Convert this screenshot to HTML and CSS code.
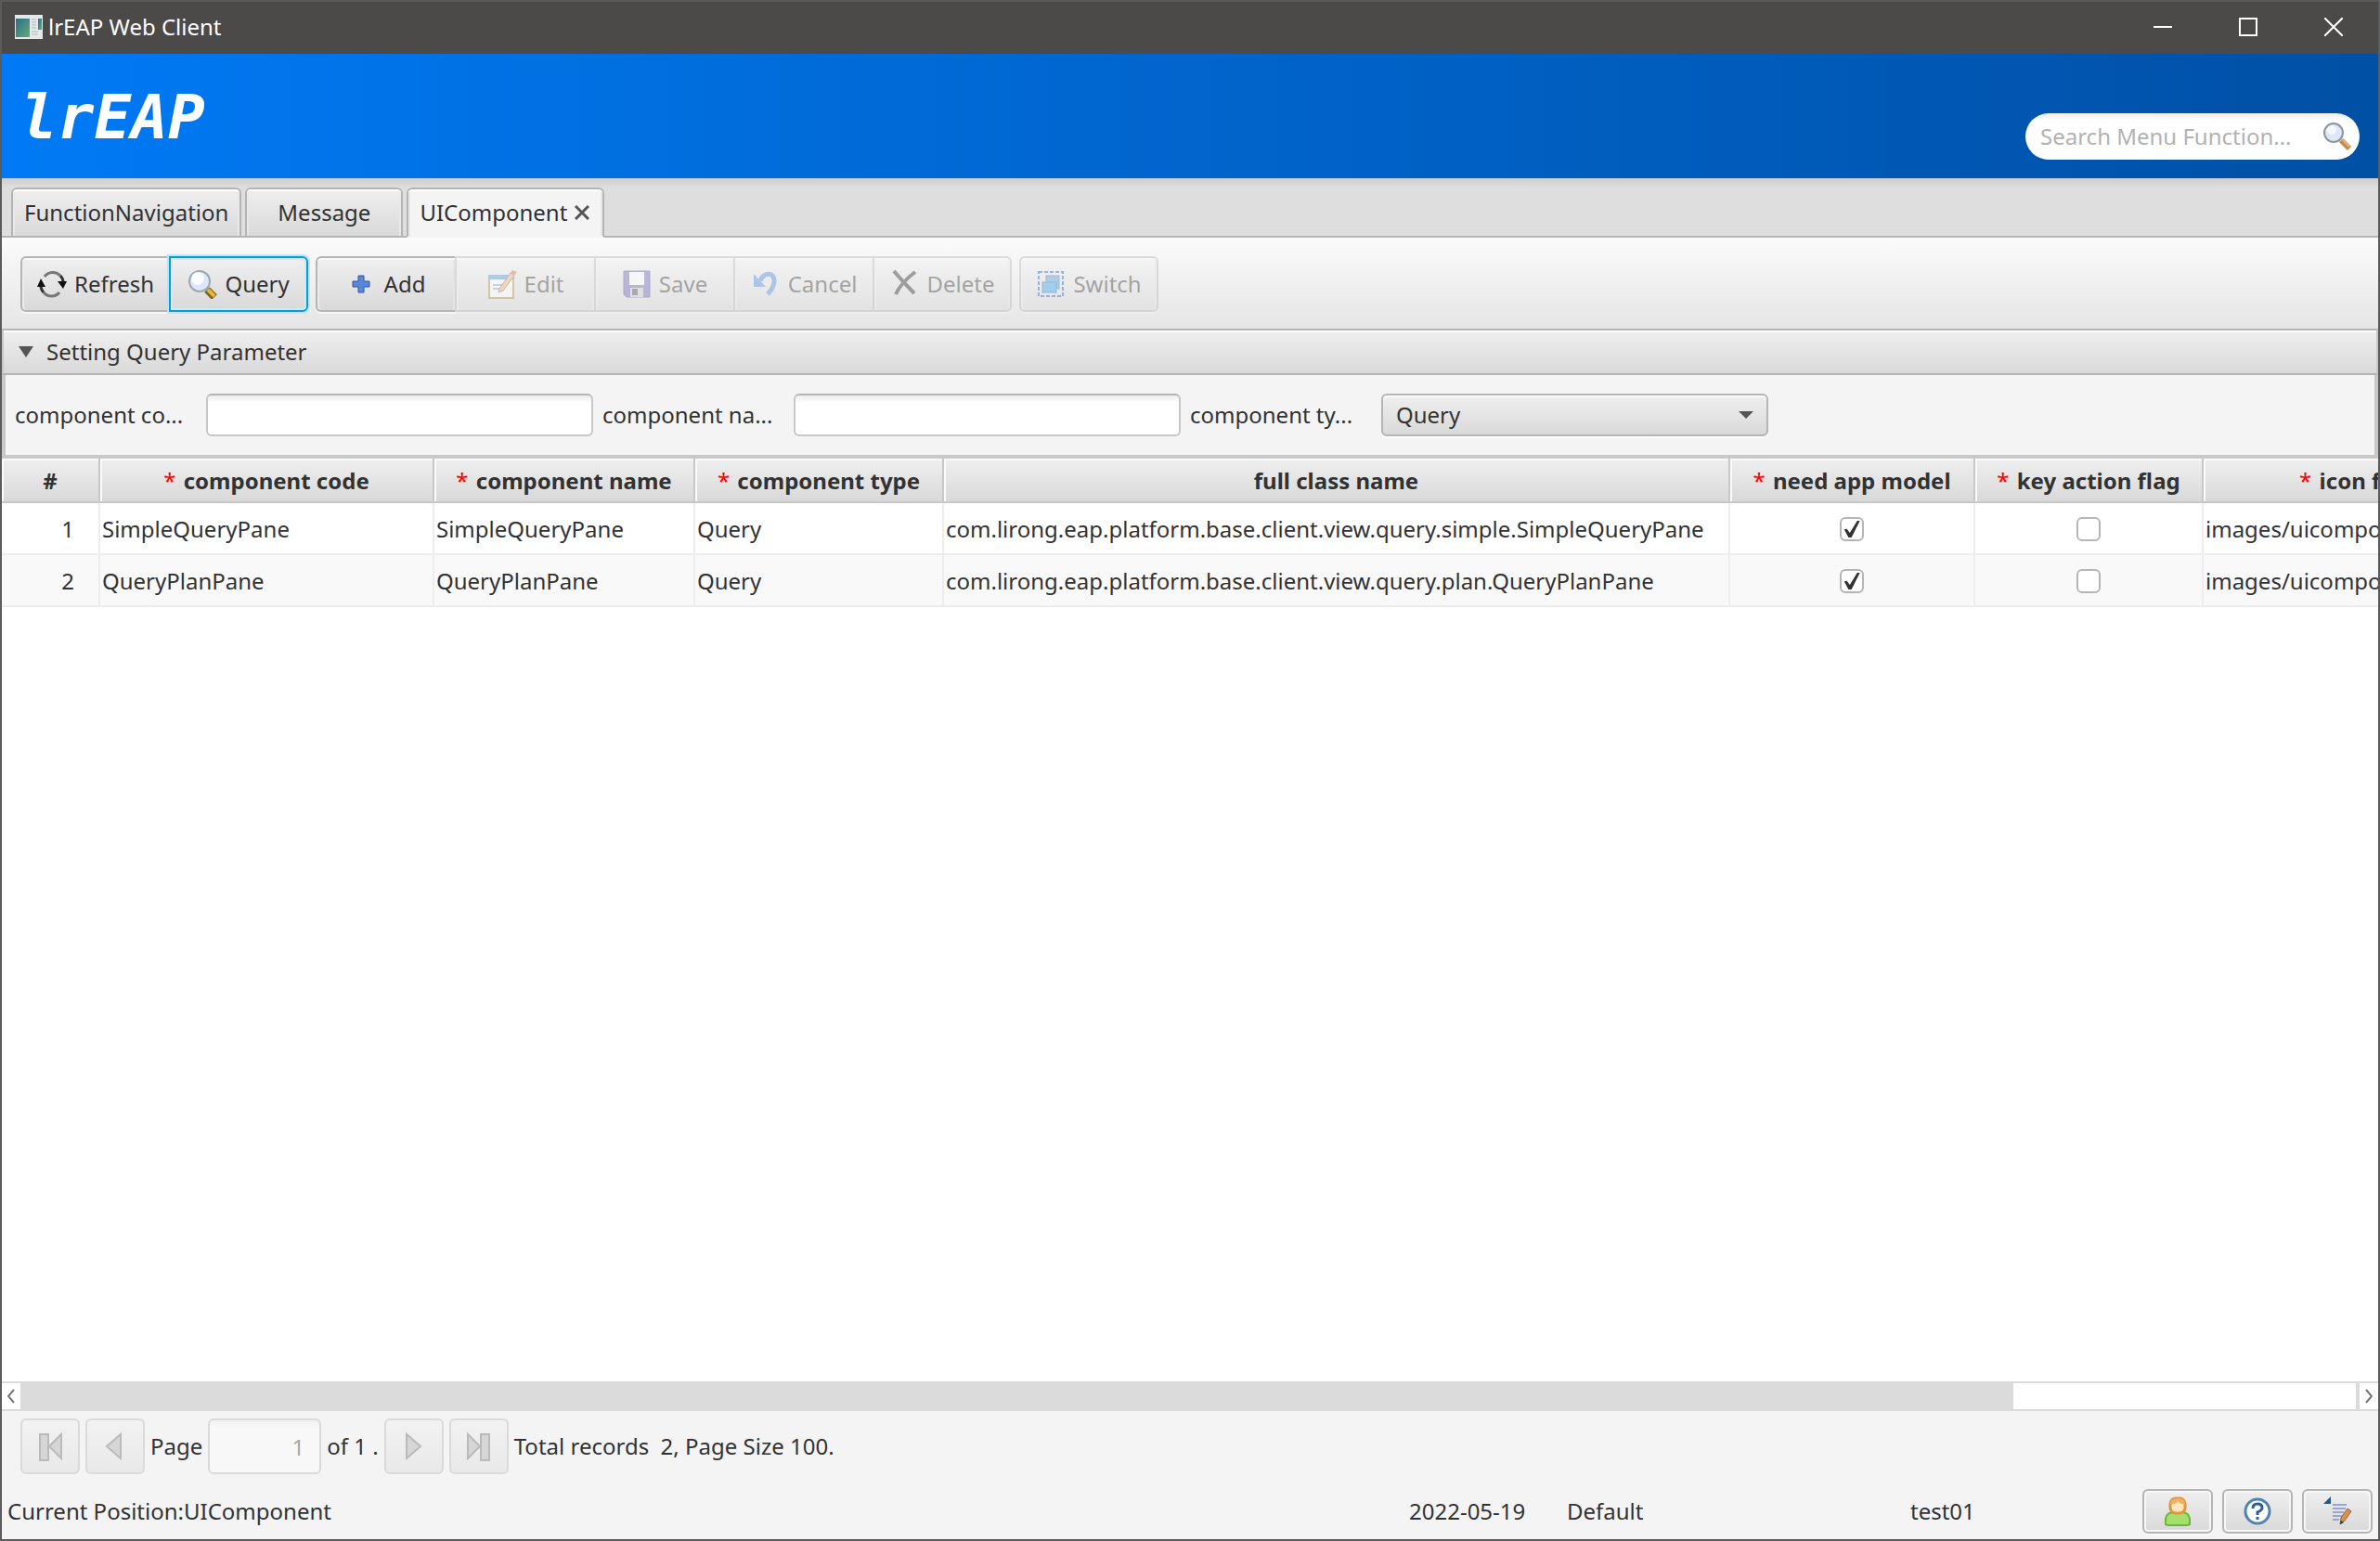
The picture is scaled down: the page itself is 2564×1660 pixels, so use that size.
FILE: index.html
```html
<!DOCTYPE html>
<html lang="en">

<head>
    <meta charset="UTF-8">
    <meta name="viewport" content="width=device-width, initial-scale=1.0">
    <title>lrEAP Web Client</title>
    <link rel="stylesheet" href="styles.css">
</head>

<body>
    <div class="window">
        <div class="title-bar">
            <svg class="app-icon" viewBox="0 0 30 26">
                <defs>
                    <linearGradient id="screen" x1="0" y1="0" x2="1" y2="1">
                        <stop offset="0" stop-color="#2f6c86"/>
                        <stop offset="1" stop-color="#62ac78"/>
                    </linearGradient>
                </defs>
                <rect width="30" height="26" fill="#e4e8ea"/>
                <rect x="1" y="4" width="15" height="20" fill="url(#screen)"/>
                <path d="M18 5h5M18 8h5M18 11h5M18 14h5M18 18h7M18 21h7" stroke="#b4b8ba"/>
                <rect x="25" y="4" width="4" height="12" fill="url(#screen)"/>
            </svg>
            <span class="title">lrEAP Web Client</span>
            <button class="win-btn" aria-label="Minimize"><svg viewBox="0 0 20 20"><path d="M0 10h20"/></svg></button>
            <button class="win-btn" aria-label="Maximize"><svg viewBox="0 0 20 20"><path d="M1 1h18v18H1z"/></svg></button>
            <button class="win-btn" aria-label="Close"><svg viewBox="0 0 20 20"><path d="M0 0l20 20M20 0L0 20"/></svg></button>
        </div>

        <header class="banner">
            <div class="logo">lrEAP</div>
            <div class="search-box">
                <input type="text" placeholder="Search Menu Function..." aria-label="Search Menu Function">
                <svg class="icon" viewBox="0 0 32 32">
                    <path d="M20 20l9 9" stroke="#c68a4c" stroke-width="6"/>
                    <path d="M21 19l8 8" stroke="#e2b27c" stroke-width="2"/>
                    <circle cx="12" cy="12" r="10" fill="#dce8f8" stroke="#8f959b" stroke-width="2"/>
                    <circle cx="10" cy="9" r="5" fill="#fff" opacity=".7"/>
                </svg>
            </div>
        </header>

        <nav class="tabs">
            <button class="tab">FunctionNavigation</button>
            <button class="tab tab-message">Message</button>
            <button class="tab active">UIComponent
                <svg class="tab-close" viewBox="0 0 16 16"><path d="M1 1l14 14M15 1L1 15"/></svg>
            </button>
        </nav>

        <div class="toolbar">
            <div class="btn-group">
                <button class="tool-btn">
                    <svg class="icon" viewBox="0 0 32 32" fill="none">
                        <path d="M8 8a11 11 0 0 1 17-1M24 25a11 11 0 0 1-17 0" stroke="#777" stroke-width="3"/>
                        <path d="M25 7q3 3 3 7M7 25q-3-3-3-7" stroke="#333" stroke-width="3"/>
                        <path d="M22 13h10l-4 8zM0 19h9L4 10z" fill="#111"/>
                    </svg>
                    Refresh
                </button>
                <button class="tool-btn focused">
                    <svg class="icon" viewBox="0 0 32 32">
                        <path d="M21 22l8 8" stroke="#7b6222" stroke-width="8"/>
                        <path d="M22 22l7 7" stroke="#e5b93c" stroke-width="4"/>
                        <circle cx="13" cy="13" r="11" fill="#dbe8fc" stroke="#a2a6aa" stroke-width="2"/>
                        <circle cx="11" cy="10" r="7" fill="#fff" opacity=".8"/>
                    </svg>
                    Query
                </button>
            </div>
            <div class="btn-group">
                <button class="tool-btn">
                    <svg class="icon" viewBox="0 0 32 32">
                        <path d="M12 7h6v6h6v6h-6v6h-6v-6H6v-6h6z" fill="#5a86d8" stroke="#2d56a8"/>
                    </svg>
                    Add
                </button>
                <button class="tool-btn" disabled>
                    <svg class="icon" viewBox="0 0 32 32">
                        <rect x="2" y="7" width="26" height="24" fill="#fff" stroke="#b58a30" stroke-width="2"/>
                        <path d="M1 6h28v5H1z" fill="#4a8fd8"/>
                        <path d="M6 17h14M6 21h8" stroke="#7da8d8" stroke-width="2"/>
                        <path d="M13 21L25 4l4 3-12 16-5 2z" fill="#f2b06a" stroke="#8a6030"/>
                        <path d="M25 4l2-3 5 2-3 4z" fill="#e0604a"/>
                    </svg>
                    Edit
                </button>
                <button class="tool-btn" disabled>
                    <svg class="icon" viewBox="0 0 32 32">
                        <path d="M2 2h28v28H5l-3-3z" fill="#6860b8" stroke="#4b4598"/>
                        <path d="M8 3h16v14H8z" fill="#fff"/>
                        <path d="M9 20h14v10H9z" fill="#ccc"/>
                        <path d="M11 21h6v7h-6z" fill="#444"/>
                    </svg>
                    Save
                </button>
                <button class="tool-btn" disabled>
                    <svg class="icon" viewBox="0 0 32 32" fill="none">
                        <path d="M10 13C12 5 21 3 24 8c3 6-1 14-6 19" stroke="#4b82dc" stroke-width="5"/>
                        <path d="M3 5v14h13z" fill="#4b82dc"/>
                    </svg>
                    Cancel
                </button>
                <button class="tool-btn" disabled>
                    <svg class="icon" viewBox="0 0 32 32" fill="none" stroke="#222">
                        <path d="M4 2q10 12 22 24" stroke-width="4"/>
                        <path d="M27 3Q12 14 6 27" stroke-width="4"/>
                    </svg>
                    Delete
                </button>
            </div>
            <div class="btn-group">
                <button class="tool-btn" disabled>
                    <svg class="icon" viewBox="0 0 32 32">
                        <rect x="3" y="3" width="26" height="26" fill="none" stroke="#1557c0" stroke-width="2" stroke-dasharray="4 2"/>
                        <rect x="11" y="7" width="14" height="14" fill="#4c98dc" stroke="#2a64b0"/>
                        <rect x="7" y="14" width="15" height="11" fill="#2f9cf0" stroke="#1d58a8"/>
                    </svg>
                    Switch
                </button>
            </div>
        </div>

        <button class="pane-title"><span class="arrow"></span>Setting Query Parameter</button>
        <form class="query-form">
            <label for="code">component co...</label>
            <input type="text" id="code">
            <label for="name">component na...</label>
            <input type="text" id="name">
            <label for="type">component ty...</label>
            <div class="select-box">
                <select id="type">
                    <option>Query</option>
                </select>
            </div>
        </form>

        <div class="table-box">
            <table>
                <colgroup>
                    <col class="col-no">
                    <col class="col-code">
                    <col class="col-name">
                    <col class="col-type">
                    <col class="col-class">
                    <col class="col-model">
                    <col class="col-key">
                    <col class="col-icon">
                </colgroup>
                <thead>
                    <tr>
                        <th>#</th>
                        <th><span class="req">*</span> component code</th>
                        <th><span class="req">*</span> component name</th>
                        <th><span class="req">*</span> component type</th>
                        <th>full class name</th>
                        <th><span class="req">*</span> need app model</th>
                        <th><span class="req">*</span> key action flag</th>
                        <th><span class="req">*</span> icon file</th>
                    </tr>
                </thead>
                <tbody>
                    <tr>
                        <td class="row-no">1</td>
                        <td>SimpleQueryPane</td>
                        <td>SimpleQueryPane</td>
                        <td>Query</td>
                        <td>com.lirong.eap.platform.base.client.view.query.simple.SimpleQueryPane</td>
                        <td class="check-cell"><input type="checkbox" aria-label="need app model" checked></td>
                        <td class="check-cell"><input type="checkbox" aria-label="key action flag"></td>
                        <td>images/uicomponent</td>
                    </tr>
                    <tr>
                        <td class="row-no">2</td>
                        <td>QueryPlanPane</td>
                        <td>QueryPlanPane</td>
                        <td>Query</td>
                        <td>com.lirong.eap.platform.base.client.view.query.plan.QueryPlanPane</td>
                        <td class="check-cell"><input type="checkbox" aria-label="need app model" checked></td>
                        <td class="check-cell"><input type="checkbox" aria-label="key action flag"></td>
                        <td>images/uicomponent</td>
                    </tr>
                </tbody>
            </table>
        </div>

        <div class="scroll-bar">
            <button aria-label="Scroll left"><svg viewBox="0 0 8 16"><path d="M7 1L1 8l6 7"/></svg></button>
            <div class="track"><div class="track-rest"></div></div>
            <button aria-label="Scroll right"><svg viewBox="0 0 8 16"><path d="M1 1l6 7-6 7"/></svg></button>
        </div>

        <div class="pager">
            <button class="page-btn" aria-label="First page" disabled>
                <svg class="icon" viewBox="0 0 32 32"><path d="M5 3h9v28H5zM28 3v26L15 16z"/></svg>
            </button>
            <button class="page-btn" aria-label="Previous page" disabled>
                <svg class="icon" viewBox="0 0 32 32"><path d="M22 3v26L7 16z"/></svg>
            </button>
            <label for="page">Page</label>
            <input type="text" id="page" value="1" disabled>
            <span>of 1 .</span>
            <button class="page-btn" aria-label="Next page" disabled>
                <svg class="icon" viewBox="0 0 32 32"><path d="M8 3v26l15-13z"/></svg>
            </button>
            <button class="page-btn" aria-label="Last page" disabled>
                <svg class="icon" viewBox="0 0 32 32"><path d="M18 3h9v28h-9zM4 3v26l13-13z"/></svg>
            </button>
            <span class="total">Total records  2, Page Size 100.</span>
        </div>

        <footer class="status-bar">
            <span class="position">Current Position:UIComponent</span>
            <span class="date">2022-05-19</span>
            <span class="org">Default</span>
            <span class="user">test01</span>
            <button class="status-btn" aria-label="User">
                <svg class="icon" viewBox="0 0 32 32">
                    <path d="M3 30V24q1-7 9-7h8q8 0 9 7v6q-2 1-3 1H6q-2 0-3-1z" fill="#a5e06a" stroke="#68b83c" stroke-width="2"/>
                    <rect x="8" y="2" width="16" height="16" rx="6" fill="#fde6bd" stroke="#e0963c" stroke-width="3"/>
                    <path d="M8 8q0-6 8-6t8 6q-5 1-8-3-2 4-8 3z" fill="#f0b060"/>
                </svg>
            </button>
            <button class="status-btn" aria-label="Help">
                <svg class="icon" viewBox="0 0 32 32" fill="none">
                    <circle cx="16" cy="16" r="13" fill="#fff" stroke="#4f83b5" stroke-width="3"/>
                    <path d="M11 13q0-5 5-5t5 4q0 3-5 5v3M16 22v3" stroke="#2f6299" stroke-width="3"/>
                </svg>
            </button>
            <button class="status-btn" aria-label="Edit log">
                <svg class="icon" viewBox="0 0 32 32">
                    <path d="M1 8L9 0v8z" fill="#1d5c8c"/>
                    <path d="M11 9h15M11 13h14M11 17h12M11 21h10M11 25h7" stroke="#98a6cf" stroke-width="2"/>
                    <path d="M20 23l7-10 4 3-7 10-5 4z" fill="#d8924e" stroke="#9c6230"/>
                    <path d="M20 26l3 2-4 2z" fill="#333"/>
                </svg>
            </button>
        </footer>
    </div>
</body>

</html>
```

FILE: styles.css
```css
* {
    box-sizing: border-box;
}

body {
    margin: 0;
    font-family: "Noto Sans", "Open Sans", sans-serif;
    font-size: 24px;
    line-height: 32px;
    color: #323232;
}

button,
input,
select {
    font: inherit;
    color: inherit;
    margin: 0;
}

.window {
    display: flex;
    flex-direction: column;
    height: 100vh;
    border: 2px solid #5b5b5b;
    background-color: #f4f4f4;
    overflow: hidden;
}

.icon {
    width: 32px;
    height: 32px;
    flex: none;
}

/* title bar */
.title-bar {
    display: flex;
    align-items: center;
    height: 56px;
    flex: none;
    padding: 0 2px 2px 14px;
    background-color: #4c4a48;
    color: #fff;
}

.app-icon {
    width: 30px;
    height: 26px;
}

.title {
    flex: 1;
    padding-left: 6px;
}

.win-btn {
    width: 92px;
    height: 54px;
    padding: 0;
    border: none;
    background: none;
    display: flex;
    align-items: center;
    justify-content: center;
}

.win-btn svg {
    width: 20px;
    height: 20px;
    fill: none;
    stroke: #fff;
    stroke-width: 2;
}

/* banner */
.banner {
    display: flex;
    justify-content: space-between;
    align-items: flex-end;
    height: 134px;
    flex: none;
    padding: 20px;
    background: linear-gradient(to right, #007af5, #0050a5);
}

.logo {
    font-family: "DejaVu Sans Mono", monospace;
    font-size: 66px;
    line-height: 90px;
    font-weight: bold;
    font-style: italic;
    color: #fff;
}

.search-box {
    display: flex;
    align-items: center;
    width: 360px;
    height: 50px;
    padding: 0 8px 0 16px;
    border-radius: 25px;
    background: linear-gradient(#ececec, #fff 8px);
}

.search-box input {
    flex: 1;
    min-width: 0;
    padding: 0;
    border: none;
    background: none;
    outline: none;
}

.search-box input::placeholder {
    color: #b2b2b2;
}

/* tabs */
.tabs {
    display: flex;
    align-items: flex-end;
    gap: 4px;
    height: 64px;
    flex: none;
    padding-left: 10px;
    background: linear-gradient(#cecece, #dedede 10px);
    box-shadow: inset 0 -2px #b5b5b5;
}

.tab {
    display: flex;
    align-items: center;
    justify-content: center;
    gap: 8px;
    height: 54px;
    padding: 0 12px;
    border: 2px solid #b5b5b5;
    border-radius: 6px 6px 0 0;
    background: linear-gradient(#efefef, #d9d9d9);
    box-shadow: inset 0 2px #fff, inset 2px 0 #e8e8e8, inset -2px 0 #e8e8e8;
}

.tab-message {
    width: 170px;
}

.tab.active {
    border-bottom-color: #f4f4f4;
    background: #f4f4f4;
    padding-right: 14px;
}

.tab-close {
    width: 16px;
    height: 16px;
    fill: none;
    stroke: #555;
    stroke-width: 3;
}

/* toolbar */
.toolbar {
    display: flex;
    align-items: center;
    gap: 8px;
    height: 98px;
    flex: none;
    padding: 2px 0 0 20px;
    background: linear-gradient(#fbfbfb, #e5e5e5);
}

.btn-group {
    display: flex;
}

.tool-btn {
    display: flex;
    align-items: center;
    justify-content: center;
    gap: 8px;
    min-width: 150px;
    height: 60px;
    padding: 0 16px;
    border: 2px solid #b5b5b5;
    border-right-width: 0;
    background: linear-gradient(#f0f0f0, #d9d9d9);
    box-shadow: inset 0 2px #fafafa, inset 2px 0 #ececec, inset -2px 0 #e4e4e4, 0 2px #f6f6f6;
}

.tool-btn:first-child {
    border-radius: 6px 0 0 6px;
}

.tool-btn:last-child {
    border-right-width: 2px;
    border-radius: 0 6px 6px 0;
}

.tool-btn:only-child {
    border-radius: 6px;
}

.tool-btn.focused {
    border-color: #039ed3;
    box-shadow: 0 0 0 2px #c5e2ec, inset 0 0 0 2px #d3e8ef;
}

.tool-btn:disabled {
    opacity: 0.4;
}

/* query pane */
.pane-title {
    display: flex;
    align-items: center;
    gap: 14px;
    height: 50px;
    flex: none;
    padding: 0 16px;
    border: 2px solid #c8c8c8;
    border-top: 2px solid #b5b5b5;
    border-bottom: 2px solid #b5b5b5;
    background: linear-gradient(#efefef, #d9d9d9);
    box-shadow: inset 0 2px #fff;
}

.arrow {
    border: 8px solid transparent;
    border-top: 12px solid #555;
    border-bottom: none;
}

.query-form {
    display: grid;
    grid-template-columns: 196px 417px 196px 417px 196px 417px;
    column-gap: 10px;
    align-items: center;
    height: 90px;
    flex: none;
    padding: 0 10px;
    border: 4px solid #c8c8c8;
    border-top-width: 0;
}

.query-form input {
    width: 100%;
    height: 46px;
    padding: 0 12px;
    border: 2px solid #c8c8c8;
    border-top-color: #b5b5b5;
    border-radius: 6px;
    background: linear-gradient(#ececec, #fff 8px);
}

.select-box {
    position: relative;
    height: 46px;
}

.select-box select {
    width: 100%;
    height: 46px;
    padding: 0 14px;
    appearance: none;
    border: 2px solid #b5b5b5;
    border-radius: 6px;
    background: linear-gradient(#efefef, #d9d9d9);
    box-shadow: inset 0 2px #fafafa, 0 2px #fcfcfc;
}

.select-box::after {
    content: "";
    position: absolute;
    right: 16px;
    top: 19px;
    border: 8px solid transparent;
    border-top: 8px solid #555;
    border-bottom: none;
    pointer-events: none;
}

/* table */
.table-box {
    flex: 1;
    min-height: 0;
    overflow: hidden;
    background-color: #fff;
}

table {
    width: 2696px;
    table-layout: fixed;
    border-collapse: separate;
    border-spacing: 0;
}

.col-no { width: 106px; }
.col-code { width: 360px; }
.col-name { width: 281px; }
.col-type { width: 268px; }
.col-class { width: 847px; }
.col-model { width: 264px; }
.col-key { width: 246px; }

th {
    height: 48px;
    padding: 2px 0 0;
    border-right: 2px solid #c8c8c8;
    border-bottom: 2px solid #c8c8c8;
    background: linear-gradient(#efefef, #d9d9d9);
    box-shadow: inset 2px 2px #fafafa;
}

.req {
    margin-right: 2px;
    font-weight: normal;
    color: #f00;
}

td {
    height: 56px;
    padding: 2px 2px 0;
    border-right: 2px solid #ededed;
    border-bottom: 2px solid #ededed;
    white-space: nowrap;
}

tbody tr:nth-child(even) {
    background-color: #f9f9f9;
}

.row-no {
    padding-right: 26px;
    text-align: right;
}

.check-cell {
    text-align: center;
    line-height: 0;
}

.check-cell input {
    display: inline-block;
    width: 26px;
    height: 26px;
    padding: 2px;
    appearance: none;
    border: 2px solid #b5b5b5;
    border-radius: 6px;
    background-color: #fff;
}

.check-cell input:checked::before {
    content: "";
    display: block;
    width: 18px;
    height: 18px;
    background-color: #323232;
    clip-path: polygon(4% 52%, 20% 48%, 38% 72%, 82% 0, 98% 0, 48% 100%, 30% 100%);
}

/* scroll bar */
.scroll-bar {
    display: flex;
    height: 32px;
    flex: none;
    padding: 2px 0;
    background-color: #dbdbdb;
}

.scroll-bar button {
    width: 20px;
    padding: 0;
    border: none;
    background-color: #fff;
    display: flex;
    align-items: center;
    justify-content: center;
}

.scroll-bar svg {
    width: 8px;
    height: 16px;
    fill: none;
    stroke: #737373;
    stroke-width: 2;
}

.track {
    flex: 1;
    display: flex;
    justify-content: flex-end;
    padding-right: 4px;
}

.track-rest {
    width: 369px;
    background-color: #fff;
}

/* pager */
.pager {
    display: flex;
    align-items: center;
    gap: 6px;
    height: 76px;
    flex: none;
    padding-left: 20px;
}

.page-btn {
    display: flex;
    align-items: center;
    justify-content: center;
    width: 64px;
    height: 60px;
    padding: 0;
    border: 2px solid #b5b5b5;
    border-radius: 6px;
    background: linear-gradient(#f0f0f0, #d9d9d9);
    opacity: 0.4;
}

.page-btn path {
    fill: #aaa;
    stroke: #666;
    stroke-width: 2;
}

.pager input {
    width: 122px;
    height: 60px;
    padding: 0 16px;
    border: 2px solid #b5b5b5;
    border-radius: 6px;
    background: linear-gradient(#ececec, #fff 8px);
    text-align: right;
    opacity: 0.4;
}

.total {
    white-space: pre;
}

/* status bar */
.status-bar {
    display: flex;
    align-items: center;
    height: 62px;
    flex: none;
    padding: 2px 6px 0;
}

.position {
    flex: 1;
}

.date {
    width: 170px;
}

.org {
    width: 370px;
}

.user {
    width: 240px;
}

.status-btn {
    display: flex;
    align-items: center;
    justify-content: center;
    width: 76px;
    height: 48px;
    padding: 0;
    margin-left: 10px;
    border: 2px solid #b5b5b5;
    border-radius: 6px;
    background: linear-gradient(#efefef, #d9d9d9);
    box-shadow: inset 0 0 0 2px #f6f6f6, 0 2px #fafafa;
}
```
